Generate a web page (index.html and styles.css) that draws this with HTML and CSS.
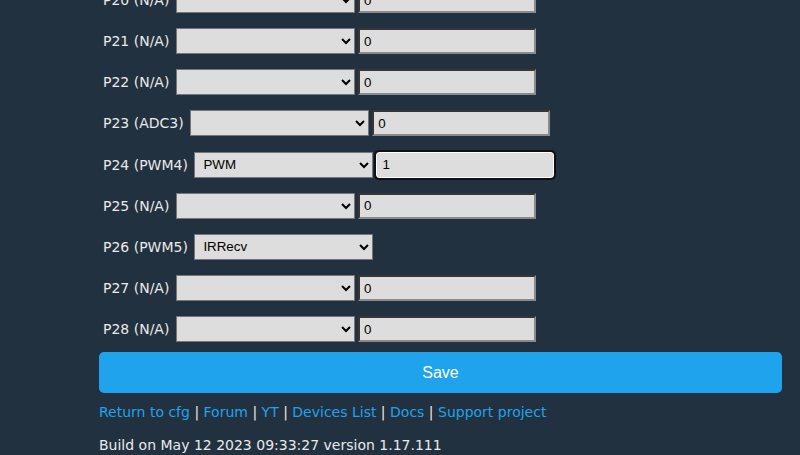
FILE: index.html
```html
<!DOCTYPE html>
<html>
<head>
<meta charset="utf-8">
<link rel="stylesheet" href="styles.css">
</head>
<body>
<div class="page">
  <div class="pins">
    <div class="row"><span class="lbl">P20 (N/A)</span><select class="sel"><option></option></select><input class="val" value="0"></div>
    <div class="row"><span class="lbl">P21 (N/A)</span><select class="sel"><option></option></select><input class="val" value="0"></div>
    <div class="row"><span class="lbl">P22 (N/A)</span><select class="sel"><option></option></select><input class="val" value="0"></div>
    <div class="row"><span class="lbl">P23 (ADC3)</span><select class="sel"><option></option></select><input class="val" value="0"></div>
    <div class="row"><span class="lbl">P24 (PWM4)</span><select class="sel"><option>PWM</option></select><input class="val focus" value="1"></div>
    <div class="row"><span class="lbl">P25 (N/A)</span><select class="sel"><option></option></select><input class="val" value="0"></div>
    <div class="row"><span class="lbl">P26 (PWM5)</span><select class="sel"><option>IRRecv</option></select></div>
    <div class="row"><span class="lbl">P27 (N/A)</span><select class="sel"><option></option></select><input class="val" value="0"></div>
    <div class="row"><span class="lbl">P28 (N/A)</span><select class="sel"><option></option></select><input class="val" value="0"></div>
  </div>
  <button class="save">Save</button>
  <div class="links"><a href="#">Return to cfg</a> | <a href="#">Forum</a> | <a href="#">YT</a> | <a href="#">Devices List</a> | <a href="#">Docs</a> | <a href="#">Support project</a></div>
  <div class="build">Build on May 12 2023 09:33:27 version 1.17.111</div>
</div>
</body>
</html>
```
FILE: styles.css
```css
html, body {
  margin: 0;
  padding: 0;
  background: #22313f;
  overflow: hidden;
}
body {
  font-family: "DejaVu Sans", Verdana, sans-serif;
  font-size: 14px;
  color: #eaeaea;
}
.page {
  width: 683px;
  margin-left: 99px;
  margin-top: -13px;
}
.pins {
  display: flex;
  flex-direction: column;
  gap: 15.17px;
}
.row {
  display: flex;
  align-items: center;
  height: 26px;
  padding-left: 4px;
}
.lbl {
  margin-right: 6.5px;
  white-space: nowrap;
}
.sel {
  width: 179px;
  height: 26px;
  box-sizing: border-box;
  background: #dddddd;
  color: #000;
  border: 1px solid #767676;
  border-radius: 0;
  font-family: "Liberation Sans", Arial, sans-serif;
  font-size: 13.33px;
  padding: 0 4px;
  margin: 0;
}
.val {
  width: 178px;
  height: 26px;
  box-sizing: border-box;
  margin: 0 0 0 3px;
  background: #dddddd;
  color: #000;
  border: 2px inset #8a8a8a;
  font-family: "Liberation Sans", Arial, sans-serif;
  font-size: 13.33px;
  padding: 0 4px;
}
.val.focus {
  outline: 2px solid #101010;
  outline-offset: 0;
  border-radius: 3px;
  border: 1px solid #ffffff;
  padding: 0 5px;
}
.save {
  display: block;
  width: 100%;
  height: 41px;
  margin-top: 10px;
  border: 0;
  border-radius: 5px;
  background: #1fa3ec;
  color: #ffffff;
  font-family: "Liberation Sans", Arial, sans-serif;
  font-size: 16px;
}
.links {
  margin-top: 11px;
  line-height: 17px;
}
.links a {
  color: #1fa3ec;
  text-decoration: none;
}
.build {
  margin-top: 16px;
  line-height: 17px;
}
```
